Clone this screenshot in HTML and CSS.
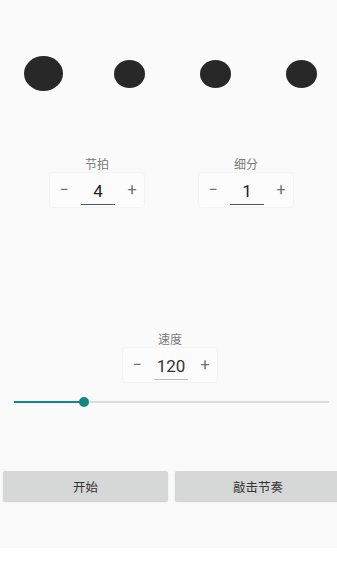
FILE: index.html
```html
<!DOCTYPE html>
<html lang="zh-CN">
<head>
<meta charset="utf-8">
<title>节拍器</title>
<link rel="stylesheet" href="styles.css">
</head>
<body>
<main class="app">
  <div class="dots">
    <span class="dot dot-accent"></span>
    <span class="dot"></span>
    <span class="dot"></span>
    <span class="dot"></span>
  </div>

  <div class="pair">
    <div class="group">
      <div class="label">节拍</div>
      <div class="stepper">
        <span class="btn">−</span>
        <span class="value">4</span>
        <span class="btn">+</span>
      </div>
    </div>
    <div class="group">
      <div class="label">细分</div>
      <div class="stepper">
        <span class="btn">−</span>
        <span class="value">1</span>
        <span class="btn">+</span>
      </div>
    </div>
  </div>

  <div class="speed">
    <div class="group">
      <div class="label">速度</div>
      <div class="stepper">
        <span class="btn">−</span>
        <span class="value value-light">120</span>
        <span class="btn">+</span>
      </div>
    </div>
  </div>

  <div class="slider">
    <div class="track">
      <div class="fill" style="width:22.2%"><span class="thumb"></span></div>
    </div>
  </div>

  <div class="actions">
    <button class="action">开始</button>
    <button class="action action-wide">敲击节奏</button>
  </div>
</main>
</body>
</html>
```
FILE: styles.css
```css
html, body {
  margin: 0;
  padding: 0;
  background: #ffffff;
}
body {
  font-family: Roboto, "Noto Sans CJK SC", sans-serif;
  color: #333;
}
.app {
  height: 548px;
  background: #fafafa;
  overflow: hidden;
  display: flex;
  flex-direction: column;
}
.dots {
  margin-top: 56px;
  height: 35px;
  display: grid;
  grid-template-columns: repeat(4, 86px);
  align-items: center;
  justify-items: center;
}
.dot {
  width: 31px;
  height: 28px;
  border-radius: 50%;
  background: #282828;
}
.dot-accent {
  width: 39px;
  height: 35px;
}
.pair {
  margin-top: 65px;
  display: flex;
  gap: 53px;
  padding-left: 49px;
}
.group {
  display: flex;
  flex-direction: column;
  align-items: center;
  width: 96px;
}
.label {
  font-family: "Noto Sans CJK SC", sans-serif;
  font-size: 12px;
  line-height: 16px;
  color: #7a7a7a;
}
.stepper {
  box-sizing: border-box;
  width: 96px;
  height: 36px;
  background: #fcfcfc;
  border: 1px solid #f4f4f4;
  border-radius: 4px;
  display: grid;
  grid-template-columns: 28px 40px 28px;
  align-items: center;
  justify-items: center;
}
.btn {
  font-size: 16px;
  color: #707070;
  line-height: 1;
  margin-top: -1px;
}
.value {
  width: 34px;
  text-align: center;
  font-size: 17px;
  line-height: 20px;
  color: #222;
  padding-top: 4px;
  padding-bottom: 3px;
  border-bottom: 1px solid #555;
  margin-top: 1px;
}
.value-light {
  border-bottom-color: #bdbdbd;
  color: #333;
}
.speed {
  margin-top: 123px;
  padding-left: 122px;
  display: flex;
}
.slider {
  margin-top: 9px;
  height: 20px;
  padding: 0 8px 0 14px;
  display: flex;
  align-items: center;
}
.track {
  flex: 1;
  height: 2px;
  background: #dcdcdc;
  position: relative;
}
.fill {
  height: 2px;
  background: #0e8a7e;
  position: relative;
}
.thumb {
  position: absolute;
  right: -5px;
  top: -4px;
  width: 10px;
  height: 10px;
  border-radius: 50%;
  background: #0e8a7e;
}
.actions {
  margin-top: 59px;
  display: flex;
  gap: 7px;
  padding-left: 3px;
}
.action {
  flex: none;
  width: 165px;
  height: 30px;
  border: none;
  border-radius: 2px;
  background: #d6d7d7;
  box-shadow: 0 1px 1.5px rgba(0,0,0,0.18);
  font-family: "Noto Sans CJK SC", sans-serif;
  font-size: 12.5px;
  color: #333;
  padding: 0;
}
.action-wide {
  width: 166px;
}
```
